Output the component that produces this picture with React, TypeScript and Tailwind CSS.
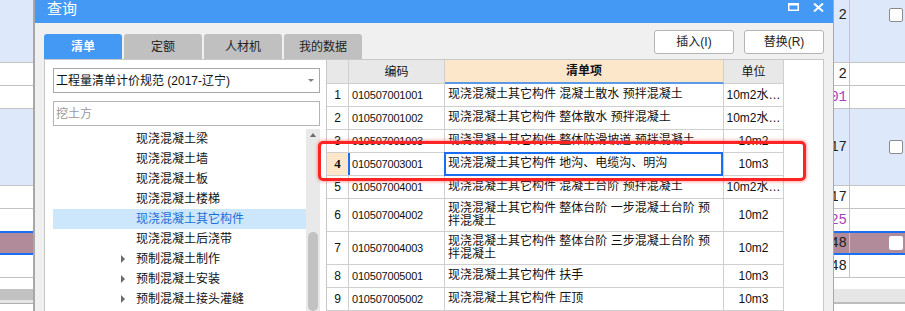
import React from 'react';

type TRow = { n: string; code: string; name: string[]; unit: string; hc: string; sel?: boolean };

const tableRows: TRow[] = [
  { n: '1', code: '010507001001', name: ['现浇混凝土其它构件 混凝土散水 预拌混凝土'], unit: '10m2水…', hc: 'h-[23px]' },
  { n: '2', code: '010507001002', name: ['现浇混凝土其它构件 整体散水 预拌混凝土'], unit: '10m2水…', hc: 'h-[23px]' },
  { n: '3', code: '010507001003', name: ['现浇混凝土其它构件 整体防滑坡道 预拌混凝土'], unit: '10m2', hc: 'h-[23px]' },
  { n: '4', code: '010507003001', name: ['现浇混凝土其它构件 地沟、电缆沟、明沟'], unit: '10m3', hc: 'h-[23px]', sel: true },
  { n: '5', code: '010507004001', name: ['现浇混凝土其它构件 混凝土台阶 预拌混凝土'], unit: '10m2水…', hc: 'h-[23px]' },
  { n: '6', code: '010507004002', name: ['现浇混凝土其它构件 整体台阶 一步混凝土台阶 预', '拌混凝土'], unit: '10m2', hc: 'h-[33px]' },
  { n: '7', code: '010507004003', name: ['现浇混凝土其它构件 整体台阶 三步混凝土台阶 预', '拌混凝土'], unit: '10m2', hc: 'h-[33px]' },
  { n: '8', code: '010507005001', name: ['现浇混凝土其它构件 扶手'], unit: '10m3', hc: 'h-[23px]' },
  { n: '9', code: '010507005002', name: ['现浇混凝土其它构件 压顶'], unit: '10m3', hc: 'h-[23px]' },
];

const tree = [
  { t: '现浇混凝土梁' },
  { t: '现浇混凝土墙' },
  { t: '现浇混凝土板' },
  { t: '现浇混凝土楼梯' },
  { t: '现浇混凝土其它构件', sel: true },
  { t: '现浇混凝土后浇带' },
  { t: '预制混凝土制作', arrow: true },
  { t: '预制混凝土安装', arrow: true },
  { t: '预制混凝土接头灌缝', arrow: true },
];

function LeftBg() {
  return (
    <div className="flex w-[33px] shrink-0 flex-col">
      <div className="h-[63px] shrink-0 border-b border-[#c4c4c4] bg-[#dde9fb]" />
      <div className="h-[23px] shrink-0 border-b border-[#c4c4c4]" />
      <div className="h-[23px] shrink-0 border-b border-[#c4c4c4]" />
      <div className="h-[77px] shrink-0 border-b border-[#c4c4c4] bg-[#dde9fb]" />
      <div className="h-[23px] shrink-0 border-b border-[#c4c4c4]" />
      <div className="h-[22px] shrink-0" />
      <div className="h-[2px] shrink-0 bg-[#1a6ff0]" />
      <div className="h-[20px] shrink-0 bg-[#b18b99]" />
      <div className="h-[2px] shrink-0 bg-[#1a6ff0]" />
      <div className="h-[23px] shrink-0 border-b border-[#c4c4c4]" />
      <div className="h-[11px] shrink-0" />
      <div className="h-[11px] shrink-0 bg-[#c2c2c2]" />
      <div className="h-[3px] shrink-0 bg-[#e6e6e6]" />
      <div className="h-[1px] shrink-0 bg-[#b0b0b0]" />
      <div className="flex-1" />
    </div>
  );
}

function Checkbox({ white }: { white?: boolean }) {
  return white ? (
    <div className="h-[14px] w-[14px] rounded-[2px] bg-white" />
  ) : (
    <div className="h-[14px] w-[14px] rounded-[2px] border border-[#8c8c8c] bg-white" />
  );
}

function RightBg() {
  return (
    <div className="flex w-[71px] shrink-0 flex-col font-['Liberation_Mono',monospace] text-[14px] leading-[16px] text-[#222]">
      <div className="flex h-[63px] shrink-0 border-b border-[#c4c4c4] bg-[#dde9fb]">
        <div className="flex w-[16px] justify-end overflow-hidden border-r border-[#c4c4c4] pr-[2px] pt-[7px]">2</div>
        <div className="flex flex-1 justify-end pr-[2px] pt-[8px]"><Checkbox /></div>
      </div>
      <div className="flex h-[23px] shrink-0 border-b border-[#c4c4c4]">
        <div className="flex w-[16px] items-center justify-end overflow-hidden border-r border-[#c4c4c4] pr-[2px]">2</div>
        <div className="flex-1" />
      </div>
      <div className="flex h-[23px] shrink-0 border-b border-[#c4c4c4]">
        <div className="flex w-[16px] items-center justify-end overflow-hidden border-r border-[#c4c4c4] pr-[2px] text-[#a640c0]">01</div>
        <div className="flex-1" />
      </div>
      <div className="flex h-[77px] shrink-0 border-b border-[#c4c4c4] bg-[#dde9fb]">
        <div className="flex w-[16px] items-center justify-end overflow-hidden border-r border-[#c4c4c4] pr-[2px]">17</div>
        <div className="flex flex-1 items-center justify-end pr-[2px]"><Checkbox /></div>
      </div>
      <div className="flex h-[23px] shrink-0 border-b border-[#c4c4c4]">
        <div className="flex w-[16px] items-center justify-end overflow-hidden border-r border-[#c4c4c4] pr-[2px]">17</div>
        <div className="flex-1" />
      </div>
      <div className="flex h-[22px] shrink-0">
        <div className="flex w-[16px] items-center justify-end overflow-hidden border-r border-[#c4c4c4] pr-[2px] text-[#a640c0]">25</div>
        <div className="flex-1" />
      </div>
      <div className="h-[2px] shrink-0 bg-[#1a6ff0]" />
      <div className="flex h-[20px] shrink-0 bg-[#b18b99]">
        <div className="flex w-[16px] items-center justify-end overflow-hidden border-r border-[#c4c4c4] pr-[2px]">48</div>
        <div className="flex flex-1 items-center justify-end pr-[2px]"><Checkbox white /></div>
      </div>
      <div className="h-[2px] shrink-0 bg-[#1a6ff0]" />
      <div className="flex h-[23px] shrink-0 border-b border-[#c4c4c4]">
        <div className="flex w-[16px] items-center justify-end overflow-hidden border-r border-[#c4c4c4] pr-[2px]">48</div>
        <div className="flex-1" />
      </div>
      <div className="h-[11px] shrink-0" />
      <div className="h-[13px] shrink-0 bg-[#e6e6e6]" />
      <div className="h-[2px] shrink-0 bg-[#bdbdbd]" />
      <div className="flex-1" />
    </div>
  );
}

function TitleBar() {
  return (
    <div className="flex h-[23px] shrink-0 items-start justify-between bg-[#4499f5] pl-[12px] pr-[9px] pt-[1px]">
      <span className="text-[15px] leading-[15px] text-white">查询</span>
      <div className="mt-[2px] flex items-start gap-[14px]">
        <svg width="11" height="8" viewBox="0 0 11 8">
          <rect x="0.75" y="1" width="9.5" height="6.25" fill="none" stroke="#fff" strokeWidth="1.5" />
          <rect x="0" y="0" width="11" height="2.5" fill="#fff" />
        </svg>
        <svg width="11" height="9" viewBox="0 0 11 9">
          <path d="M1 0.5 L10 8.5 M10 0.5 L1 8.5" stroke="#fff" strokeWidth="2" fill="none" />
        </svg>
      </div>
    </div>
  );
}

function Tabs() {
  return (
    <div className="flex h-[36px] shrink-0 justify-between px-[9px]">
      <div className="flex items-end gap-[2px]">
        <div className="flex h-[25px] w-[78px] items-center justify-center rounded-t-[3px] bg-[#4499f5] font-bold text-white">清单</div>
        <div className="flex h-[25px] w-[78px] items-center justify-center rounded-t-[3px] bg-[#c0c0c0] text-[#222]">定额</div>
        <div className="flex h-[25px] w-[78px] items-center justify-center rounded-t-[3px] bg-[#c0c0c0] text-[#222]">人材机</div>
        <div className="flex h-[25px] w-[78px] items-center justify-center rounded-t-[3px] bg-[#c0c0c0] text-[#222]">我的数据</div>
      </div>
      <div className="mt-[7px] flex items-start gap-[10px]">
        <div className="flex h-[24px] w-[80px] items-center justify-center rounded-[3px] border border-[#b4b4b4] bg-white text-[#222]">插入(I)</div>
        <div className="flex h-[24px] w-[80px] items-center justify-center rounded-[3px] border border-[#b4b4b4] bg-white text-[#222]">替换(R)</div>
      </div>
    </div>
  );
}

function LeftPanel() {
  return (
    <div className="flex w-[281px] shrink-0 flex-col pl-[8px] pr-[6px] pt-[8px]">
      <div className="flex h-[25px] shrink-0 items-center justify-between border border-[#a9a9a9] bg-white pl-[2px] pr-[5px]">
        <span className="whitespace-nowrap text-[#111]">工程量清单计价规范 (2017-辽宁)</span>
        <span className="h-0 w-0 border-x-[3px] border-t-[3px] border-x-transparent border-t-[#808080]" />
      </div>
      <div className="mt-[8px] flex h-[25px] shrink-0 items-center border border-[#b4b4b4] bg-white pl-[2px]">
        <span className="text-[#9a9a9a]">挖土方</span>
      </div>
      <div className="mt-[3px] flex flex-1 overflow-hidden">
        <div className="flex w-[253px] flex-col">
          {tree.map((it) => (
            <div
              key={it.t}
              className={
                it.sel
                  ? 'flex h-[20px] shrink-0 items-center bg-[#cce6fc] text-[#1d6fd8]'
                  : 'flex h-[20px] shrink-0 items-center text-[#111]'
              }
            >
              <span className="w-[68px] shrink-0" />
              <span className="flex w-[15px] shrink-0 items-center">
                {it.arrow ? (
                  <span className="h-0 w-0 border-y-[4px] border-l-[4px] border-y-transparent border-l-[#6a6a6a]" />
                ) : null}
              </span>
              <span className="whitespace-nowrap">{it.t}</span>
            </div>
          ))}
        </div>
        <div className="flex w-[14px] flex-col items-center bg-[#e9e9e9]">
          <span className="mt-[4px] h-0 w-0 border-x-[3px] border-b-[4px] border-x-transparent border-b-[#6a6a6a]" />
          <div className="mt-[95px] h-[120px] w-[10px] rounded-full bg-[#c2c2c2]" />
        </div>
      </div>
    </div>
  );
}

function Table() {
  return (
    <div className="flex flex-col border-l border-[#c8c8c8]">
      <div className="flex h-[24px] shrink-0">
        <div className="w-[22px] border-b border-r border-[#cfcfcf] bg-[#e8e8e8]" />
        <div className="flex w-[96px] items-center justify-center border-b border-r border-[#cfcfcf] bg-[#e8e8e8]">编码</div>
        <div className="flex w-[279px] items-center justify-center border-b-2 border-r border-b-[#5a9ae6] border-r-[#cfcfcf] bg-[#fde7cb] font-bold">清单项</div>
        <div className="flex w-[60px] items-center justify-center border-b border-r border-[#cfcfcf] bg-[#e8e8e8]">单位</div>
      </div>
      {tableRows.map((r) => (
        <div key={r.n} className={'flex shrink-0 ' + r.hc}>
          <div
            className={
              r.sel
                ? 'flex w-[22px] items-center justify-center border-b border-r border-[#cfcfcf] bg-[#fde7cb] font-["Liberation_Serif",serif] text-[13px] font-bold'
                : 'flex w-[22px] items-center justify-center border-b border-r border-[#cfcfcf] bg-white'
            }
          >
            {r.n}
          </div>
          <div className="relative flex w-[96px] items-center border-b border-r border-[#cfcfcf] pl-[3px] text-[11px] tracking-[-0.2px]">
            {r.sel ? <span className="absolute left-[-1px] top-0 h-full w-[2px] bg-[#1a6ff0]" /> : null}
            {r.code}
          </div>
          <div className="relative flex w-[279px] flex-col justify-center border-b border-r border-[#cfcfcf] pb-[1px] pl-[3px] leading-[13px]">
            {r.name.map((l) => (
              <span key={l} className="whitespace-nowrap">{l}</span>
            ))}
            {r.sel ? <span className="absolute -bottom-[1px] -left-[1px] -right-[0px] -top-[1px] border-2 border-[#1a6ff0]" /> : null}
          </div>
          <div className="flex w-[60px] items-center justify-center whitespace-nowrap border-b border-r border-[#cfcfcf]">{r.unit}</div>
        </div>
      ))}
    </div>
  );
}

function Dialog() {
  return (
    <div className="flex w-[801px] shrink-0 flex-col border-l-2 border-r border-[#a8a8a8] bg-[#f0f0f0]">
      <TitleBar />
      <Tabs />
      <div className="mx-[9px] flex flex-1 overflow-hidden border border-b-0 border-[#c8c8c8] bg-white">
        <LeftPanel />
        <Table />
        <div className="flex-1" />
      </div>
    </div>
  );
}

export default function App() {
  return (
    <div className="relative flex h-[311px] w-[905px] overflow-hidden bg-white font-['Liberation_Sans','Noto_Sans_CJK_SC',sans-serif] text-[12px] leading-[14px] text-[#111]">
      <LeftBg />
      <Dialog />
      <RightBg />
      <div className="pointer-events-none absolute left-[318px] top-[141px] h-[40px] w-[488px] rounded-[5px] border-[3px] border-[#ff2424] shadow-[0_0_3px_1px_rgba(255,60,60,0.45)]" />
    </div>
  );
}
